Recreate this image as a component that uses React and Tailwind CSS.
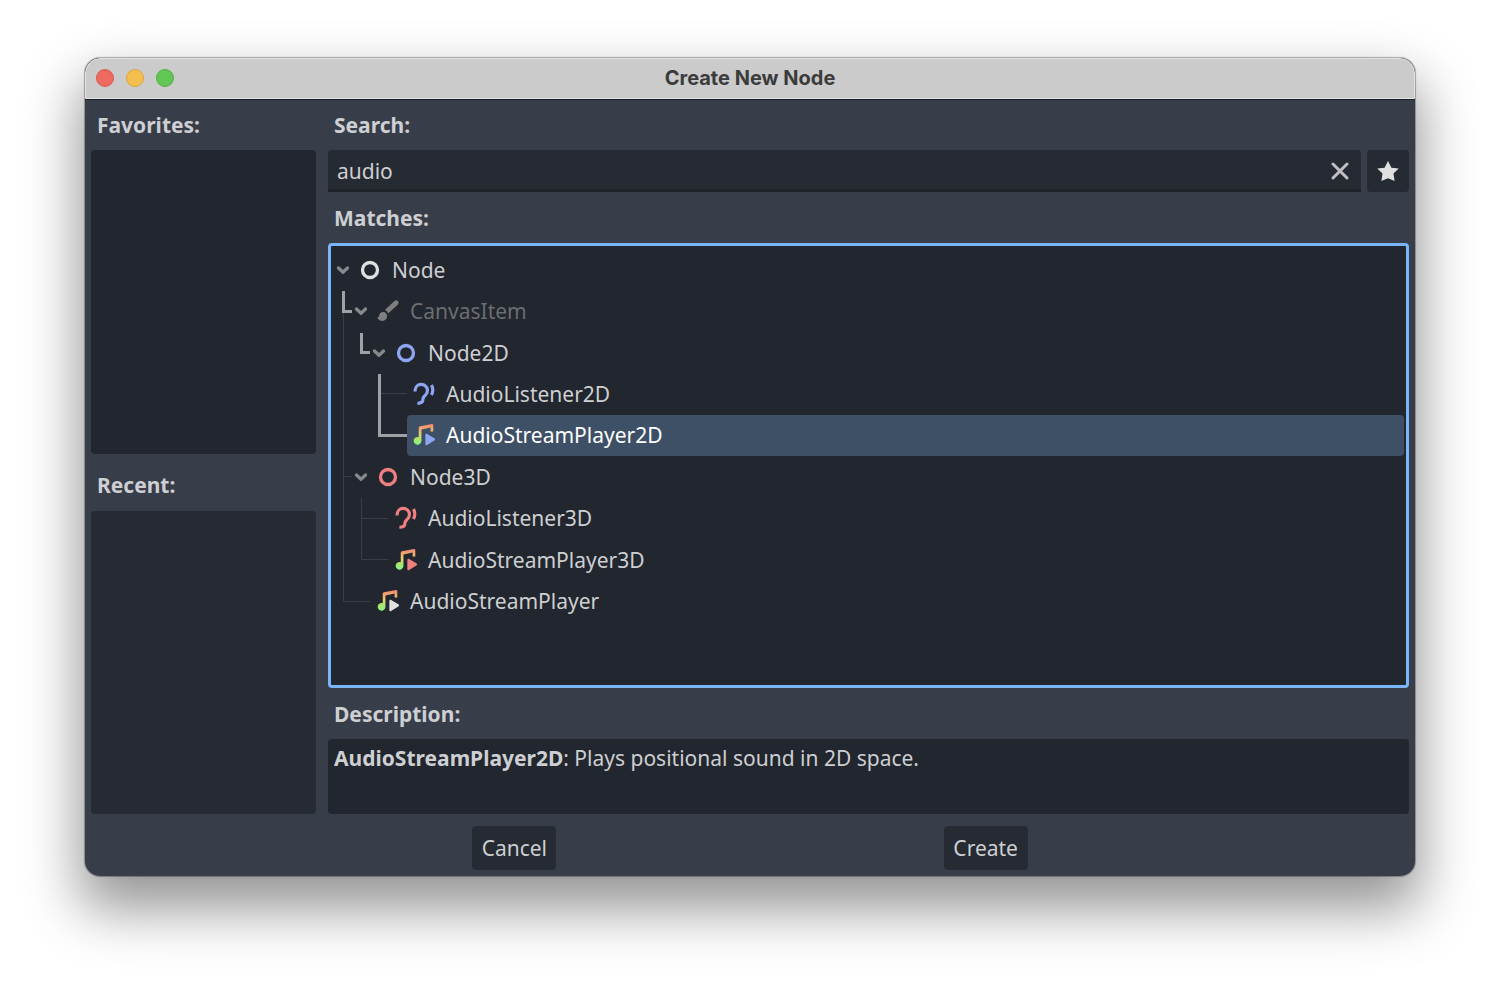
import { useState } from 'react'

const nodes = [
  { name: 'Node', depth: 0, icon: 'ring', color: '#e0e0e0', open: true },
  { name: 'CanvasItem', depth: 1, icon: 'brush', color: '#7f7f7f', open: true, disabled: true },
  { name: 'Node2D', depth: 2, icon: 'ring', color: '#8da5f3', open: true },
  { name: 'AudioListener2D', depth: 3, icon: 'ear', color: '#8da5f3' },
  { name: 'AudioStreamPlayer2D', depth: 3, icon: 'music', color: '#8da5f3' },
  { name: 'Node3D', depth: 1, icon: 'ring', color: '#f08080', open: true },
  { name: 'AudioListener3D', depth: 2, icon: 'ear', color: '#f08080' },
  { name: 'AudioStreamPlayer3D', depth: 2, icon: 'music', color: '#f08080' },
  { name: 'AudioStreamPlayer', depth: 1, icon: 'music', color: '#e0e0e0' },
]

const indents = ['pl-0', 'pl-[18px]', 'pl-[36px]', 'pl-[54px]']

function NodeIcon({ type, color }) {
  return (
    <svg viewBox="0 0 16 16" className="size-6 shrink-0" fill="none" aria-hidden="true">
      {type === 'ring' && <circle cx="8" cy="8" r="5" stroke={color} strokeWidth="2.2" />}
      {type === 'brush' && (
        <g fill={color}>
          <path d="M14.6 1.3a1.7 1.7 0 0 0-2.3 0L5.9 7.4c.9.3 1.8 1.100 2.200 2.200l6.500-6a1.700 1.700 0 0 0 0-2.300z" />
          <path d="M4.700 8.600c-1.500 0-2.500 1-2.600 2.400 0 .8-.5 1.300-1.300 1.300.7 1.600 1.900 2.300 3.400 2.300 1.900 0 3.200-1.300 3.200-3.200 0-1.600-1-2.800-2.700-2.800z" />
        </g>
      )}
      {type === 'ear' && (
        <g stroke={color} strokeWidth="2.1">
          <path d="M2 6.3C2 3.3 3.8 1.6 6.1 1.6s4.2 1.8 4.2 4.1c0 2-1 2.8-1.9 3.6-.8.7-1.1 1.2-1.1 2.2 0 1.8-1 2.7-3.7 2.7" strokeLinejoin="round" />
          <path d="M13 2c1.2 2.3 1.2 4.3 0 6.6" />
        </g>
      )}
      {type === 'music' && (
        <>
          <path
            d="M13.3.6a.8.8 0 0 1 .9.8v4.200h-1.800V3L6.300 4.300V12A2.600 2.600 0 1 1 4.500 9.400V2.900a.9.9 0 0 1 .7-.8z"
            fill="url(#noteFill)"
          />
          <path d="M8.900 8c0-.8.6-1.100 1.200-.7l4.800 2.900c.6.400.6 1.100 0 1.500l-4.800 3c-.6.400-1.200.1-1.200-.7z" fill={color} />
        </>
      )}
    </svg>
  )
}

function TreeLines() {
  return (
    <svg className="absolute left-0 top-px pointer-events-none" width="80" height="373" fill="none" aria-hidden="true">
      <g stroke="#3a3e46">
        <path d="M12.5 62V351.5H39M12.5 226.5H21" />
        <path d="M30.5 248V309.5H57M30.5 268.5H57" />
        <path d="M50 143.5H76" />
      </g>
      <g stroke="#a0a1a4" strokeWidth="3">
        <path d="M12.5 41V61.5H21" />
        <path d="M30.5 83V102.5H39" />
        <path d="M48.5 124V185.5H76" />
      </g>
    </svg>
  )
}

function Chevron() {
  return (
    <svg viewBox="0 0 18 18" className="size-[18px]" fill="none" aria-hidden="true">
      <path d="M4.5 7L9 11.2 13.5 7" stroke="#88898d" strokeWidth="3.3" strokeLinecap="round" strokeLinejoin="round" />
    </svg>
  )
}

function Heading({ children, htmlFor, className = '' }) {
  const Tag = htmlFor ? 'label' : 'h2'
  return (
    <Tag htmlFor={htmlFor} className={`flex h-[51px] shrink-0 items-center px-1.5 font-bold ${className}`}>
      {children}
    </Tag>
  )
}

export default function App() {
  const [query, setQuery] = useState('audio')
  const [selected, setSelected] = useState('AudioStreamPlayer2D')

  return (
    <main className="flex min-h-screen flex-col bg-white px-[85px] pt-[58px] pb-[112px] font-['Noto_Sans',sans-serif] text-[21px] leading-[30px] text-[#cdcfd2]">
      <svg className="absolute size-0" aria-hidden="true">
        <linearGradient id="noteFill" gradientUnits="userSpaceOnUse" x1="0" y1="1" x2="0" y2="15">
          <stop offset="0" stopColor="#f5886f" />
          <stop offset=".4" stopColor="#ecca6c" />
          <stop offset=".75" stopColor="#9fea72" />
          <stop offset="1" stopColor="#84f58c" />
        </linearGradient>
      </svg>

      <section className="flex flex-1 flex-col overflow-hidden rounded-[15px] bg-[#383d4a] shadow-[0_0_1px_1px_rgba(0,0,0,0.3),0_28px_55px_5px_rgba(0,0,0,0.42)]">
        <header className="grid h-[41px] shrink-0 grid-cols-[1fr_auto_1fr] items-center rounded-t-[15px] border border-[#e2e2e2] bg-[#cbcbcb] px-[10px] pb-0.5">
          <div className="flex gap-3">
            <button aria-label="Close" className="size-[18px] rounded-full border border-[#d65a50] bg-[#ee6a5f]" />
            <button aria-label="Minimize" className="size-[18px] rounded-full border border-[#d9a441] bg-[#f5bf4f]" />
            <button aria-label="Zoom" className="size-[18px] rounded-full border border-[#53ae45] bg-[#62c655]" />
          </div>
          <h1 className="font-[Inter,sans-serif] text-[20px] leading-6 font-bold text-[#3b3b3b]">Create New Node</h1>
        </header>

        <div className="flex flex-1 gap-3 px-1.5 shadow-[inset_0_1px_0_#1b1f29]">
          <aside className="flex w-[225px] shrink-0 flex-col">
            <Heading>Favorites:</Heading>
            <div className="flex-1 rounded bg-[#22262e]" />
            <Heading className="mt-1.5">Recent:</Heading>
            <div className="flex-1 rounded bg-[#262a33]" />
          </aside>

          <div className="flex min-w-0 flex-1 flex-col">
            <Heading htmlFor="search">Search:</Heading>
            <div className="flex h-[42px] gap-1.5">
              <div className="flex min-w-0 flex-1 items-center rounded-t border-b-[3px] border-[#1f2329] bg-[#262a33] pt-0.5 pr-3 pl-[9px]">
                <input
                  id="search"
                  className="min-w-0 flex-1 bg-transparent outline-none"
                  value={query}
                  onChange={e => setQuery(e.target.value)}
                />
                <button aria-label="Clear" onClick={() => setQuery('')}>
                  <svg viewBox="0 0 18 18" className="size-[18px]" fill="none">
                    <path d="M2 2l14 14M16 2L2 16" stroke="#bfc0c3" strokeWidth="3" strokeLinecap="round" />
                  </svg>
                </button>
              </div>
              <button aria-label="Favorite" className="flex w-[42px] items-center justify-center rounded bg-[#262a33]">
                <svg viewBox="0 0 24 24" className="size-6" fill="#e0e0e0">
                  <path d="M12 2l3.4 6.7 7.3.9-5.2 5 1.1 7.3L12 19.2l-6.6 2.7 1.1-7.3-5.2-5 7.3-.9z" />
                </svg>
              </button>
            </div>

            <Heading>Matches:</Heading>
            <div className="flex-1 rounded border-[3px] border-[#7ab5fa] bg-[#22262e] pt-[3px] pr-0.5">
              <div className="relative">
                <TreeLines />
                <ul role="tree" aria-label="Matches" className="grid h-[373px] auto-rows-fr">
                  {nodes.map(node => (
                    <li key={node.name} role="treeitem" aria-selected={selected === node.name} className={`flex ${indents[node.depth]}`}>
                      <span className="flex w-[22px] shrink-0 items-center pl-[3px]">{node.open && <Chevron />}</span>
                      <button
                        disabled={node.disabled}
                        onClick={() => setSelected(node.name)}
                        className={`flex flex-1 items-center gap-2.5 rounded pl-[5px] ${
                          selected === node.name ? 'bg-[#3e5066] text-white' : node.disabled ? 'text-[#6b6d71]' : ''
                        }`}
                      >
                        <NodeIcon type={node.icon} color={node.color} />
                        {node.name}
                      </button>
                    </li>
                  ))}
                </ul>
              </div>
            </div>

            <Heading>Description:</Heading>
            <p className="min-h-[75px] rounded bg-[#22262e] px-1.5 py-1">
              <b>AudioStreamPlayer2D</b>: Plays positional sound in 2D space.
            </p>
          </div>
        </div>

        <footer className="flex justify-evenly gap-1.5 px-1.5 pt-3 pb-1.5">
          <button className="h-11 w-[84px] rounded bg-[#262a33]">Cancel</button>
          <button className="h-11 w-[84px] rounded bg-[#262a33]">Create</button>
        </footer>
      </section>
    </main>
  )
}
